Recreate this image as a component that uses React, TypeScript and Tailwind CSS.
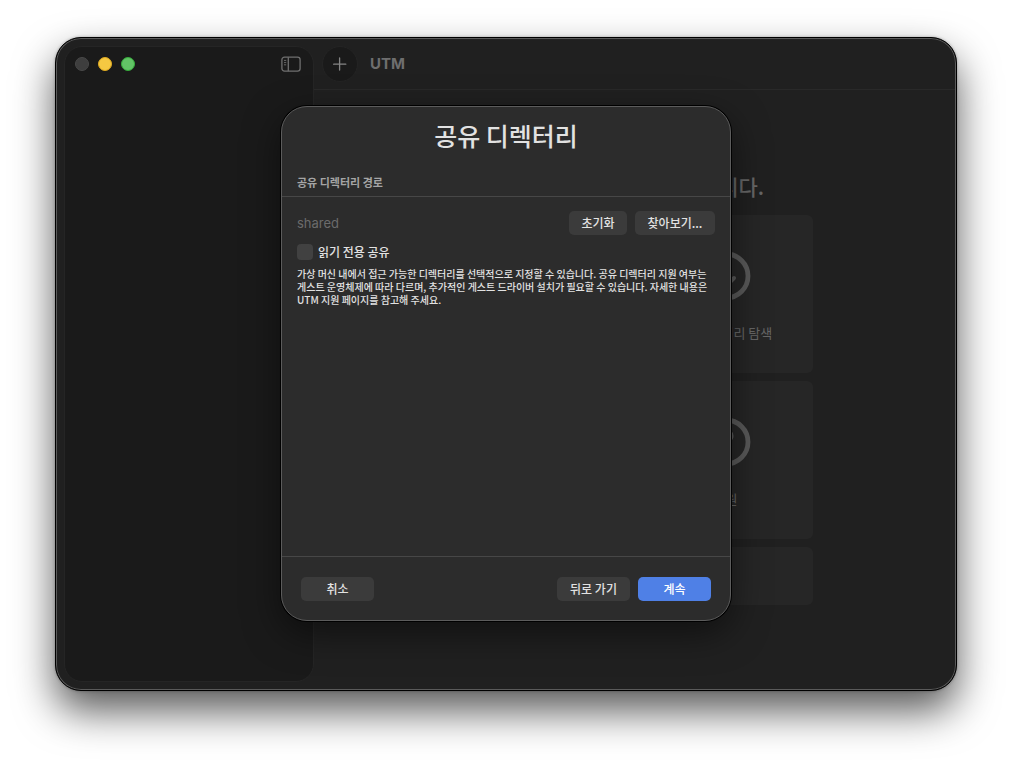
import type { ReactNode } from "react"

const cjk = "font-['Noto_Sans_CJK_KR',sans-serif]"
const latin = "font-['Inter','Noto_Sans_CJK_KR',sans-serif]"

function SidebarIcon() {
  return (
    <svg width="20" height="16" viewBox="0 0 20 16" fill="none" stroke="#6f6f6f" strokeWidth="1.3">
      <rect x="0.9" y="1.1" width="18.2" height="14" rx="2.6" />
      <path d="M7.3 1.2v14" />
      <path d="M3 4.4h2.2M3 6.6h2.2M3 8.8h2.2" strokeWidth="0.9" />
    </svg>
  )
}

function PlusIcon() {
  return (
    <svg width="14" height="14" viewBox="0 0 14 14" stroke="#858585" strokeWidth="1.3" strokeLinecap="round">
      <path d="M6.6 0.9v12.2M0.6 7.2h12.2" />
    </svg>
  )
}

function CircleIcon({ children }: { children?: ReactNode }) {
  return (
    <svg width="50" height="50" viewBox="0 0 50 50" fill="none" stroke="#5a5a5a" strokeWidth="4" strokeLinecap="round" strokeLinejoin="round">
      <circle cx="25" cy="25" r="22" strokeWidth="4.8" />
      {children}
    </svg>
  )
}

function WelcomeCard({ label, children }: { label: string; children: ReactNode }) {
  return (
    <button type="button" className="flex h-[158px] flex-col items-center rounded-md bg-[#262626] pt-9">
      <CircleIcon>{children}</CircleIcon>
      <span className="mt-[22px] text-[13px] leading-5">{label}</span>
    </button>
  )
}

function PushButton({ children, className }: { children: ReactNode; className: string }) {
  return (
    <button
      type="button"
      className={`flex h-6 items-center justify-center rounded-[5px] text-[12px] leading-4 font-medium ${className}`}
    >
      {children}
    </button>
  )
}

function SharedDirectorySheet() {
  return (
    <div
      role="dialog"
      aria-labelledby="sheet-title"
      className="flex h-[515px] w-[450px] flex-col overflow-hidden rounded-[26px] border border-[#5c5c5c] bg-[#2c2c2c] text-[#e2e2e2] shadow-[0_0_0_1px_#000,0_12px_36px_rgba(0,0,0,0.5)]"
    >
      <h1 id="sheet-title" className="pt-3 text-center text-[25px] leading-8 font-medium">
        공유 디렉터리
      </h1>
      <h2 className="mt-[23px] border-b border-[#474747] px-[15px] pb-[6px] text-[11px] leading-4 font-bold text-[#a5a5a5]">
        공유 디렉터리 경로
      </h2>

      <div className="flex-1 px-[15px] pt-[14px]">
        <div className="flex items-center gap-2">
          <input
            type="text"
            readOnly
            aria-label="공유 디렉터리 경로"
            value="shared"
            className={`min-w-0 flex-1 bg-transparent text-[13px] leading-4 text-[#6b6b6b] outline-none ${latin}`}
          />
          <PushButton className="w-[58px] bg-[#3b3b3b]">초기화</PushButton>
          <PushButton className="w-20 bg-[#3b3b3b]">찾아보기...</PushButton>
        </div>
        <label className="mt-2 flex h-[18px] items-center gap-[5px] text-[12px] leading-4 font-medium">
          <input type="checkbox" className="size-4 appearance-none rounded-sm bg-[#414141]" />
          읽기 전용 공유
        </label>
        <p className="mt-[6px] text-[10px] leading-[13px] font-medium break-keep">
          가상 머신 내에서 접근 가능한 디렉터리를 선택적으로 지정할 수 있습니다. 공유 디렉터리 지원 여부는 게스트 운영체제에 따라
          다르며, 추가적인 게스트 드라이버 설치가 필요할 수 있습니다. 자세한 내용은 UTM 지원 페이지를 참고해 주세요.
        </p>
      </div>

      <div className="flex gap-2 border-t border-[#474747] px-[19px] pt-5 pb-[19px]">
        <PushButton className="mr-auto w-[73px] bg-[#3b3b3b]">취소</PushButton>
        <PushButton className="w-[73px] bg-[#3b3b3b]">뒤로 가기</PushButton>
        <PushButton className="w-[73px] bg-[#4f80e6] text-white">계속</PushButton>
      </div>
    </div>
  )
}

export default function App() {
  return (
    <div className={`flex min-h-screen bg-white px-[55px] pt-[37px] pb-[73px] ${cjk}`}>
      <div className="relative flex flex-1 rounded-[26px] border border-black bg-[#202020] shadow-[inset_0_0_0_1px_#5a5a5a,0_0_3px_rgba(0,0,0,0.3),0_20px_40px_rgba(0,0,0,0.65)]">
        <aside className="my-2 ml-2 w-[250px] rounded-[18px] border border-[#252525] bg-[#1a1a1a]">
          <div className="flex items-center gap-[9px] pt-[9px] pr-3 pl-[10px]">
            <span className="size-[14px] rounded-full border border-[#484848] bg-[#3e3e3e]" />
            <span className="size-[14px] rounded-full border border-[#e0aa20] bg-[#f5c842]" />
            <span className="size-[14px] rounded-full border border-[#35ad3b] bg-[#62c466]" />
            <button type="button" aria-label="사이드바" className="ml-auto">
              <SidebarIcon />
            </button>
          </div>
        </aside>

        <main className="flex flex-1 flex-col pr-px">
          <header className="flex h-[52px] items-center gap-3 border-b border-[#292929] px-2">
            <button
              type="button"
              aria-label="새로 만들기"
              className="flex size-9 items-center justify-center rounded-full border border-[#242424] bg-[#1a1a1a]"
            >
              <PlusIcon />
            </button>
            <span className={`text-[15px] leading-5 font-bold text-[#6e6e6e] ${latin}`}>UTM</span>
          </header>

          <div className="flex flex-col items-center pt-20 text-[#666666]">
            <h2 className="text-[21px] leading-8 font-medium">UTM에 오신 것을 환영합니다.</h2>
            <div className="mt-[13px] grid w-[356px] grid-cols-2 gap-2">
              <WelcomeCard label="새 가상머신 만들기">
                <path d="M25 15v20M15 25h20" />
              </WelcomeCard>
              <WelcomeCard label="UTM 갤러리 탐색">
                <path d="M25 14v21M17 27l8 8 8-8" />
              </WelcomeCard>
              <WelcomeCard label="사용자 가이드">
                <path d="M25 23v12M25 15v1" />
              </WelcomeCard>
              <WelcomeCard label="지원">
                <path d="M19 19c0-7 11.5-7 11.5 0 0 5-5.5 4-5.5 9M25 35v0" />
              </WelcomeCard>
              <button type="button" className="col-span-2 h-[58px] rounded-md bg-[#262626] text-[13px] leading-5">
                서버
              </button>
            </div>
          </div>
        </main>

        <div className="absolute inset-0 flex items-start justify-center pt-[68px]">
          <SharedDirectorySheet />
        </div>
      </div>
    </div>
  )
}
